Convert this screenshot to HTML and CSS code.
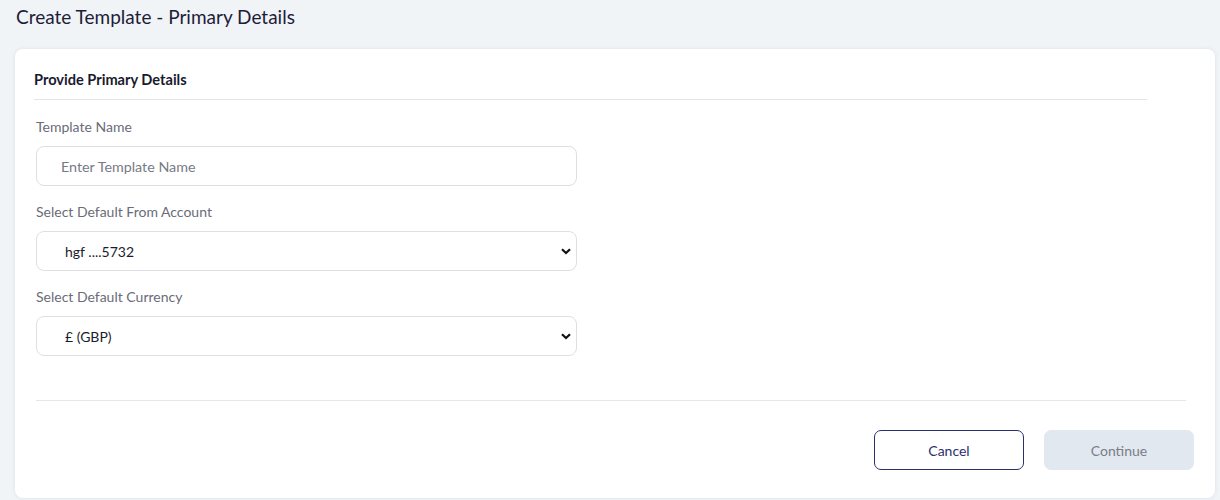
FILE: index.html
```html
<!DOCTYPE html>
<html>
<head>
<meta charset="utf-8">
<link rel="stylesheet" href="styles.css">
</head>
<body>
<div class="page">
  <h1 class="title">Create Template - Primary Details</h1>
  <div class="card">
    <div class="card-header">Provide Primary Details</div>
    <form class="form">
      <div class="field">
        <label class="label">Template Name</label>
        <input class="control" type="text" placeholder="Enter Template Name">
      </div>
      <div class="field">
        <label class="label">Select Default From Account</label>
        <select class="control select"><option>hgf ....5732</option></select>
      </div>
      <div class="field">
        <label class="label">Select Default Currency</label>
        <select class="control select"><option>£ (GBP)</option></select>
      </div>
    </form>
    <div class="footer">
      <button class="btn btn-outline" type="button">Cancel</button>
      <button class="btn btn-disabled" type="button">Continue</button>
    </div>
  </div>
</div>
</body>
</html>
```

FILE: styles.css
```css
* { box-sizing: border-box; }
html, body { margin: 0; padding: 0; }
body {
  background: #f1f4f7;
  font-family: Lato, "Liberation Sans", sans-serif;
  color: #1d1d3a;
  height: 500px;
  overflow: hidden;
}
.page {
  padding: 0 5px 0 15px;
}
.title {
  margin: 0;
  padding: 5px 0 0 1px;
  height: 49px;
  font-size: 19px;
  line-height: 24px;
  font-weight: 400;
  color: #1d1d3a;
}
.card {
  background: #ffffff;
  border-radius: 8px;
  box-shadow: 0 0 4px rgba(40, 50, 80, 0.10);
  height: 449px;
  padding: 0 21px 0 21px;
}
.card-header {
  margin: 0 47px 0 -2px;
  padding: 21px 0 9px 0;
  font-size: 14.6px;
  line-height: 20px;
  font-weight: 700;
  color: #1a1a2e;
  border-bottom: 1px solid #e2e5ea;
}
.form {
  display: flex;
  flex-direction: column;
  gap: 16px;
  padding-top: 17px;
  padding-bottom: 44px;
  border-bottom: 1px solid #e3e8ef;
  margin-right: 8px;
}
.field {
  display: flex;
  flex-direction: column;
  gap: 9px;
}
.label {
  font-size: 14px;
  line-height: 20px;
  color: #6a6c78;
}
.control {
  width: 541px;
  height: 40px;
  border: 1px solid #dedfe3;
  border-radius: 8px;
  background: #fff;
  padding: 0 24px;
  font-family: inherit;
  font-size: 14px;
  color: #1c1c2c;
  outline: none;
}
.control::placeholder { color: #777a84; font-size: 14.3px; }
.select {
  appearance: none;
  -webkit-appearance: none;
  padding-left: 28px;
  background-image: url("data:image/svg+xml;utf8,<svg xmlns='http://www.w3.org/2000/svg' width='10' height='7' viewBox='0 0 10 7'><path d='M1 1.2 L5 5 L9 1.2' fill='none' stroke='%23111' stroke-width='2.2'/></svg>");
  background-repeat: no-repeat;
  background-position: right 5px center;
}
.footer {
  display: flex;
  justify-content: flex-end;
  gap: 20px;
  padding-top: 29px;
}
.btn {
  width: 150px;
  height: 40px;
  border-radius: 7px;
  font-family: inherit;
  font-size: 14px;
  cursor: pointer;
}
.btn-outline {
  background: #fff;
  border: 1px solid #2c2f6e;
  color: #2c2f6e;
}
.btn-disabled {
  background: #e2e8f0;
  border: 1px solid #e2e8f0;
  color: #7a7d86;
}
```
